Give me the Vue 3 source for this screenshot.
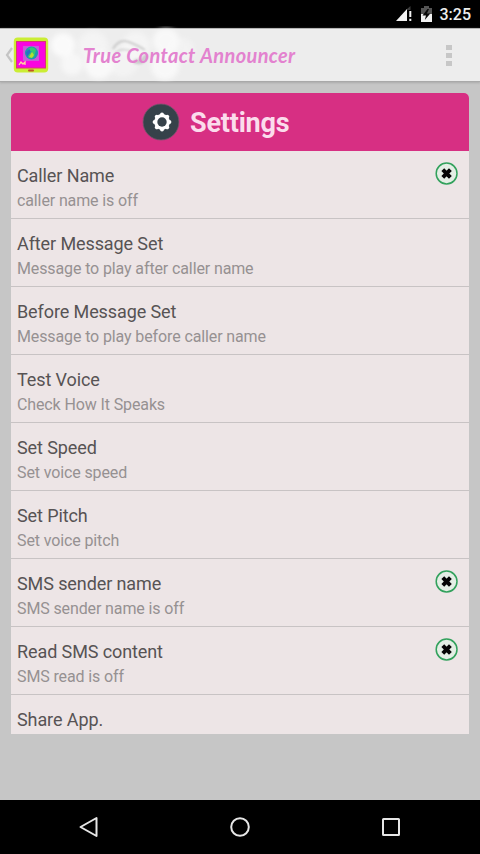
<script setup>
const rows = [
  { title: 'Caller Name', note: 'caller name is off', off: true },
  { title: 'After Message Set', note: 'Message to play after caller name' },
  { title: 'Before Message Set', note: 'Message to play before caller name' },
  { title: 'Test Voice', note: 'Check How It Speaks' },
  { title: 'Set Speed', note: 'Set voice speed' },
  { title: 'Set Pitch', note: 'Set voice pitch' },
  { title: 'SMS sender name', note: 'SMS sender name is off', off: true },
  { title: 'Read SMS content', note: 'SMS read is off', off: true },
  { title: 'Share App.', note: '' },
]
</script>

<template>
  <div class="screen">
    <div class="status">
      <svg class="signal" width="17" height="16" viewBox="0 0 17 16">
        <path d="M0 15L11 3V15Z" fill="#f2f2f2" />
        <path d="M11 3L14.500 0V4H11Z" fill="#3c3c3c" />
        <path d="M13.300 5h2v6h-2zM13.300 12.800h2V15h-2z" fill="#f2f2f2" />
      </svg>
      <svg class="battery" width="11" height="16" viewBox="0 0 11 16">
        <path d="M3 0h5v2h3v7H0V2h3z" fill="#555" />
        <path d="M0 8h11v8H0z" fill="#f2f2f2" />
        <path d="M6.500 3L1.500 9.500H5L3.800 14L9.300 7.500H5.900L8 3Z" fill="#080808" />
      </svg>
      <span class="clock">3:25</span>
    </div>

    <header class="bar">
      <svg class="clouds" width="160" height="56" viewBox="0 0 160 56">
        <defs>
          <filter id="soft" x="-20%" y="-20%" width="140%" height="140%">
            <feGaussianBlur stdDeviation="2.500" />
          </filter>
          <filter id="wisp" x="-20%" y="-40%" width="140%" height="180%">
            <feGaussianBlur stdDeviation="1.200" />
          </filter>
        </defs>
        <g fill="#fff" filter="url(#soft)" opacity="0.750">
          <circle cx="18" cy="19" r="12" />
          <circle cx="27" cy="38" r="11" opacity="0.750" />
          <circle cx="48" cy="20" r="15" opacity="0.500" />
          <circle cx="54" cy="39" r="14" opacity="0.900" />
          <circle cx="78" cy="36" r="15" opacity="0.450" />
          <circle cx="91" cy="20" r="14" opacity="0.550" />
          <circle cx="121" cy="15" r="13" opacity="0.850" />
          <circle cx="120" cy="40" r="14" opacity="0.850" />
          <circle cx="137" cy="24" r="12" opacity="0.400" />
        </g>
        <g fill="none" stroke="#777" filter="url(#wisp)" opacity="0.300">
          <path d="M68 23Q74 12 84 16T100 24" stroke-width="2" />
          <path d="M70 28Q75 21 86 25" stroke-width="1.500" />
          <path d="M89 35Q98 38 101 29" stroke-width="5" />
        </g>
      </svg>
      <svg class="up" width="8" height="18" viewBox="0 0 8 18">
        <path d="M7 2L2 9L7 16" fill="none" stroke="#c4c4c4" stroke-width="2.200" />
      </svg>
      <svg class="logo" width="36" height="36" viewBox="0 0 36 36">
        <rect x="0.800" y="0.500" width="34.400" height="35" rx="4" fill="#cbed35" />
        <rect x="3" y="4" width="30" height="27.500" fill="#d93a72" />
        <rect x="4" y="5" width="28" height="25.500" fill="#fa05df" />
        <rect x="10" y="9" width="16" height="15" fill="#c85bd9" />
        <circle cx="18.500" cy="16" r="6.500" fill="#1b9cae" />
        <path d="M15 12q5-4 8 1l-2 7-5 1-2-4 5-2z" fill="#36c970" />
        <path d="M16 20l3-5 2 3-2 3z" fill="#b3df32" />
        <path d="M13 15l4-3v4l-3 4z" fill="#286fc6" />
        <path d="M6 28l2-3 2 2 2-2v3" fill="none" stroke="#ffd8a0" stroke-width="1.300" />
        <rect x="15" y="32.500" width="6" height="2" rx="1" fill="#c45128" />
      </svg>
      <h1>True Contact Announcer</h1>
      <div class="more"><i></i><i></i><i></i></div>
    </header>

    <main class="content">
      <section class="card">
        <div class="head">
          <svg width="38" height="38" viewBox="0 0 38 38">
            <circle cx="19" cy="19" r="18" fill="#36424a" stroke="#7b566f" stroke-width="0.800" />
            <g fill="#fff">
              <circle cx="20" cy="19" r="7.900" />
              <circle v-for="n in 8" :key="n" cx="20" cy="11.600" r="2" :transform="`rotate(${n * 45} 20 19)`" />
            </g>
            <circle cx="20" cy="19" r="4.700" fill="#36424a" />
          </svg>
          <h2>Settings</h2>
        </div>
        <ul>
          <li v-for="row in rows" :key="row.title">
            <div class="copy">
              <div class="title">{{ row.title }}</div>
              <div class="note">{{ row.note }}</div>
            </div>
            <svg v-if="row.off" class="toggle" width="24" height="24" viewBox="0 0 24 24">
              <circle cx="11.600" cy="11.500" r="10.400" fill="#e4eee5" stroke="#32a15c" stroke-width="1.500" />
              <path d="M7.800 7.700L15.400 15.300M15.400 7.700L7.800 15.300" stroke="#050505" stroke-width="4" />
            </svg>
          </li>
        </ul>
      </section>
    </main>

    <nav class="nav">
      <svg width="22" height="22" viewBox="0 0 22 22"><path d="M18.500 2V20L2.500 11Z" /></svg>
      <svg width="22" height="22" viewBox="0 0 22 22"><circle cx="11" cy="11" r="8.800" /></svg>
      <svg width="22" height="22" viewBox="0 0 22 22"><rect x="3" y="3" width="16" height="16" rx="0.500" /></svg>
    </nav>
  </div>
</template>

<style>
body {
  margin: 0;
  background: #000;
}
</style>

<style scoped>
.screen {
  width: 480px;
  height: 854px;
  display: flex;
  flex-direction: column;
  overflow: hidden;
  background: #c6c6c6;
  font-family: Roboto, "Liberation Sans", sans-serif;
}
svg {
  display: block;
  flex: none;
}
.status {
  height: 28px;
  flex: none;
  box-sizing: border-box;
  padding: 0 9px 0 0;
  display: flex;
  align-items: center;
  justify-content: flex-end;
  background: #000;
}
.battery {
  margin: 0 8px 0 8px;
}
.clock {
  padding-top: 2px;
  color: #eee;
  font-size: 16px;
  font-weight: 500;
  line-height: 26px;
}
.bar {
  position: relative;
  height: 54px;
  flex: none;
  box-sizing: border-box;
  padding: 0 28px 0 5px;
  display: flex;
  align-items: center;
  background: #ededed;
  border-top: 1px solid #b5b5b5;
  border-bottom: 1px solid #a9a9a9;
  box-shadow: 0 1px 2px #aaa;
}
.clouds {
  position: absolute;
  left: 45px;
  top: -3px;
}
h1 {
  position: relative;
  margin: 0 auto 0 34px;
  color: #e382cf;
  font-family: Lato, "Open Sans", sans-serif;
  font-size: 20px;
  font-weight: 700;
  font-style: italic;
  letter-spacing: 0.35px;
  line-height: 24px;
  white-space: nowrap;
}
.more {
  display: grid;
  gap: 3px;
}
.more i {
  width: 6px;
  height: 5px;
  background: #c7c7c7;
}
.content {
  flex: 1;
  padding: 11px 11px 0;
}
.card {
  height: 641px;
  overflow: hidden;
  border-radius: 5px 5px 0 0;
  background: #ede5e6;
}
.head {
  height: 58px;
  box-sizing: border-box;
  padding-left: 131px;
  display: flex;
  align-items: center;
  gap: 10px;
  background: #d72f83;
}
h2 {
  margin: 2px 0 0;
  color: #fbdcec;
  font-size: 27px;
  font-weight: 700;
  letter-spacing: -0.2px;
  line-height: 32px;
}
ul {
  margin: 0;
  padding: 0;
  list-style: none;
}
li {
  height: 68px;
  box-sizing: border-box;
  padding: 11px 10px 0 6px;
  display: flex;
  align-items: flex-start;
  justify-content: space-between;
  border-bottom: 1px solid #c8c3c4;
}
.title {
  padding-top: 1px;
  color: #575354;
  font-size: 18px;
  letter-spacing: -0.1px;
  line-height: 26px;
}
.note {
  color: #969192;
  font-size: 16px;
  letter-spacing: -0.12px;
  line-height: 23px;
}
.nav {
  height: 54px;
  flex: none;
  box-sizing: border-box;
  padding: 0 78px;
  display: flex;
  align-items: center;
  justify-content: space-between;
  background: #000;
}
.nav path,
.nav circle,
.nav rect {
  fill: none;
  stroke: #e6e6e6;
  stroke-width: 2;
  stroke-linejoin: round;
}
</style>
